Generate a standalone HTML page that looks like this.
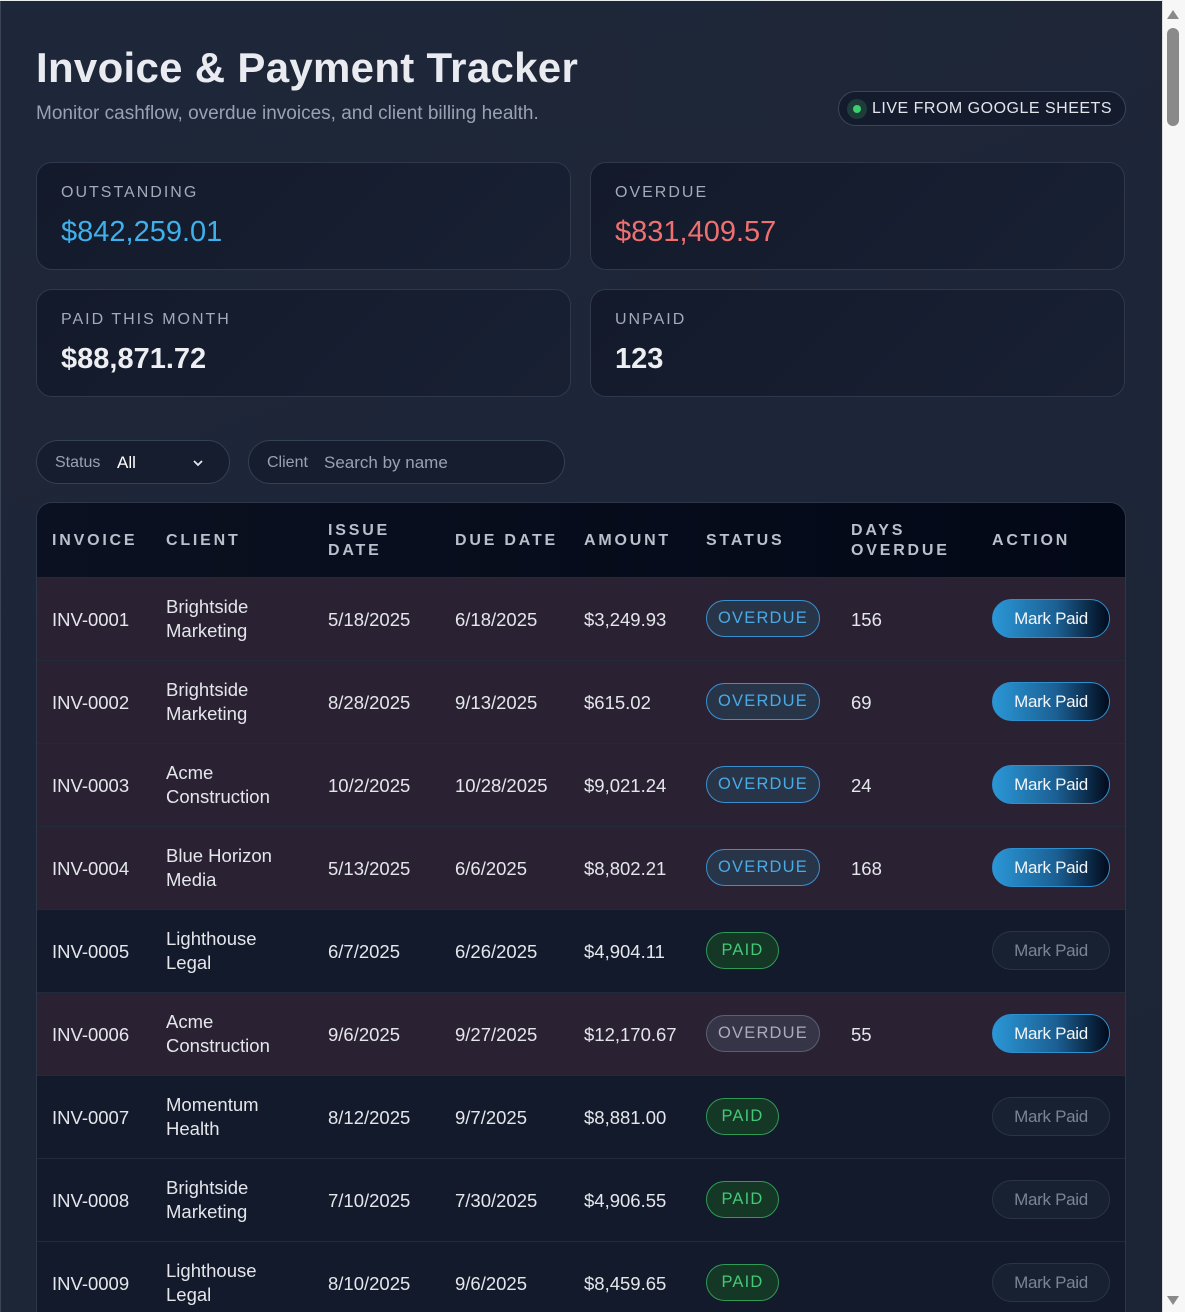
<!DOCTYPE html>
<html><head><meta charset="utf-8">
<style>
*{box-sizing:border-box;margin:0;padding:0}
html,body{width:1185px;height:1312px;overflow:hidden}
body{background:#fff;font-family:"Liberation Sans","DejaVu Sans",sans-serif;position:relative}
#page{position:absolute;left:0;top:0;width:1162px;height:1312px;background:linear-gradient(160deg,#1e2739,#1c2536);border-top:1px solid #e8eef0;overflow:hidden}
#page:before{content:"";position:absolute;left:0;top:0;width:1px;height:100%;background:#3a4558}
.sb{position:absolute;left:1162px;top:0;width:23px;height:1312px;background:#f7f7f7;border-left:1px solid #ddd}
.thumb{position:absolute;left:1167px;top:28px;width:12px;height:98px;background:#8a8a8a;border-radius:6px}
.abs{position:absolute}
h1{position:absolute;left:36px;top:43px;font-size:42px;font-weight:bold;color:#e9ebf0;letter-spacing:0.3px}
.sub{left:36px;top:102px;font-size:19px;color:#98a2b3}
.live{left:838px;top:90px;width:288px;height:35px;border:1px solid #3b4659;border-radius:18px;background:#131b2c;color:#e3e6ec;font-size:16px;letter-spacing:0.5px;line-height:33px;padding-left:33px}
.live .dot{position:absolute;left:8px;top:7px;width:20px;height:20px;border-radius:50%;background:#1e3c3a}
.live .dot:after{content:"";position:absolute;left:6px;top:6px;width:8px;height:8px;border-radius:50%;background:#3ccf6c}
.card{position:absolute;width:535px;height:108px;border:1px solid #2f394b;border-radius:16px;background:linear-gradient(135deg,#131a2b,#182033)}
.card .l{position:absolute;left:24px;top:21px;font-size:16px;letter-spacing:2px;color:#a3abb9}
.card .v{position:absolute;left:24px;top:53px;font-size:29px;font-weight:bold;color:#eceef2}
.filt{position:absolute;height:44px;top:439px;border:1px solid #344053;border-radius:22px;background:#151d2e}
.filt .k{position:absolute;top:13px;font-size:16px;color:#98a2b3}
.filt .val{position:absolute;top:12px;font-size:17px}
.tbl{position:absolute;left:36px;top:501px;width:1090px;height:830px;border:1px solid #2d374a;border-radius:16px;overflow:hidden;background:#121a2b}
.thead{position:absolute;left:0;top:0;width:100%;height:74px;background:linear-gradient(90deg,#0b1120,#030817)}
.th{position:absolute;font-size:16px;font-weight:bold;letter-spacing:2.8px;color:#b9c0cc;line-height:20px}
.row{position:absolute;left:0;width:100%;height:83px;border-top:1px solid #222b3c}
.row.od{background:#2a2233}
.row.pd{background:#121a2b}
.c{position:absolute;font-size:18.5px;color:#e4e6eb;line-height:24px}
.badge{position:absolute;left:669px;top:22px;height:37px;border-radius:19px;font-size:16.5px;letter-spacing:1.2px;line-height:35px;text-align:center}
.b-od{width:114px;border:1px solid #3b8fcf;background:#283549;color:#49aae6}
.b-gr{width:114px;border:1px solid #5b5f70;background:#363447;color:#a8acb8}
.b-pd{width:73px;border:1px solid #2f9a55;background:#143726;color:#44c877}
.btn{position:absolute;left:955px;top:21px;width:118px;height:39px;border-radius:20px;font-size:17px;line-height:37px;text-align:center;letter-spacing:-0.3px}
.btn.on{background:linear-gradient(90deg,#2a97d6,#1b5f93 55%,#020a1a);border:1px solid #2e8fd0;color:#f2f6fa}
.btn.off{background:#182131;border:1px solid #2b3446;color:#7b8494}
</style></head><body>
<div id="page">
<h1>Invoice &amp; Payment Tracker</h1>
<div class="abs sub">Monitor cashflow, overdue invoices, and client billing health.</div>
<div class="abs live"><span class="dot"></span>LIVE FROM GOOGLE SHEETS</div>

<div class="card" style="left:36px;top:161px"><div class="l">OUTSTANDING</div><div class="v" style="color:#3db1ec;font-weight:normal">$842,259.01</div></div>
<div class="card" style="left:590px;top:161px"><div class="l">OVERDUE</div><div class="v" style="color:#f07070;font-weight:normal">$831,409.57</div></div>
<div class="card" style="left:36px;top:288px"><div class="l">PAID THIS MONTH</div><div class="v">$88,871.72</div></div>
<div class="card" style="left:590px;top:288px"><div class="l">UNPAID</div><div class="v">123</div></div>

<div class="filt" style="left:36px;width:194px"><span class="k" style="left:18px">Status</span><span class="val" style="left:80px;color:#fff">All</span>
<svg class="abs" style="left:154px;top:15px" width="14" height="14" viewBox="0 0 14 14"><path d="M3 5l4 4 4-4" fill="none" stroke="#e6e8ee" stroke-width="1.8"/></svg></div>
<div class="filt" style="left:248px;width:317px"><span class="k" style="left:18px">Client</span><span class="val" style="left:75px;color:#98a2b3">Search by name</span></div>

<div class="tbl">
<div class="thead">
<div class="th" style="left:15px;top:28px">INVOICE</div>
<div class="th" style="left:129px;top:28px">CLIENT</div>
<div class="th" style="left:291px;top:18px">ISSUE<br>DATE</div>
<div class="th" style="left:418px;top:28px">DUE DATE</div>
<div class="th" style="left:547px;top:28px">AMOUNT</div>
<div class="th" style="left:669px;top:28px">STATUS</div>
<div class="th" style="left:814px;top:18px">DAYS<br>OVERDUE</div>
<div class="th" style="left:955px;top:28px">ACTION</div>
</div>

<div class="row od" style="top:74px"><div class="c" style="left:15px;top:30px">INV-0001</div><div class="c" style="left:129px;top:17px">Brightside<br>Marketing</div><div class="c" style="left:291px;top:30px">5/18/2025</div><div class="c" style="left:418px;top:30px">6/18/2025</div><div class="c" style="left:547px;top:30px">$3,249.93</div><div class="badge b-od">OVERDUE</div><div class="c" style="left:814px;top:30px">156</div><div class="btn on">Mark Paid</div></div>
<div class="row od" style="top:157px"><div class="c" style="left:15px;top:30px">INV-0002</div><div class="c" style="left:129px;top:17px">Brightside<br>Marketing</div><div class="c" style="left:291px;top:30px">8/28/2025</div><div class="c" style="left:418px;top:30px">9/13/2025</div><div class="c" style="left:547px;top:30px">$615.02</div><div class="badge b-od">OVERDUE</div><div class="c" style="left:814px;top:30px">69</div><div class="btn on">Mark Paid</div></div>
<div class="row od" style="top:240px"><div class="c" style="left:15px;top:30px">INV-0003</div><div class="c" style="left:129px;top:17px">Acme<br>Construction</div><div class="c" style="left:291px;top:30px">10/2/2025</div><div class="c" style="left:418px;top:30px">10/28/2025</div><div class="c" style="left:547px;top:30px">$9,021.24</div><div class="badge b-od">OVERDUE</div><div class="c" style="left:814px;top:30px">24</div><div class="btn on">Mark Paid</div></div>
<div class="row od" style="top:323px"><div class="c" style="left:15px;top:30px">INV-0004</div><div class="c" style="left:129px;top:17px">Blue Horizon<br>Media</div><div class="c" style="left:291px;top:30px">5/13/2025</div><div class="c" style="left:418px;top:30px">6/6/2025</div><div class="c" style="left:547px;top:30px">$8,802.21</div><div class="badge b-od">OVERDUE</div><div class="c" style="left:814px;top:30px">168</div><div class="btn on">Mark Paid</div></div>
<div class="row pd" style="top:406px"><div class="c" style="left:15px;top:30px">INV-0005</div><div class="c" style="left:129px;top:17px">Lighthouse<br>Legal</div><div class="c" style="left:291px;top:30px">6/7/2025</div><div class="c" style="left:418px;top:30px">6/26/2025</div><div class="c" style="left:547px;top:30px">$4,904.11</div><div class="badge b-pd">PAID</div><div class="btn off">Mark Paid</div></div>
<div class="row od" style="top:489px"><div class="c" style="left:15px;top:30px">INV-0006</div><div class="c" style="left:129px;top:17px">Acme<br>Construction</div><div class="c" style="left:291px;top:30px">9/6/2025</div><div class="c" style="left:418px;top:30px">9/27/2025</div><div class="c" style="left:547px;top:30px">$12,170.67</div><div class="badge b-gr">OVERDUE</div><div class="c" style="left:814px;top:30px">55</div><div class="btn on">Mark Paid</div></div>
<div class="row pd" style="top:572px"><div class="c" style="left:15px;top:30px">INV-0007</div><div class="c" style="left:129px;top:17px">Momentum<br>Health</div><div class="c" style="left:291px;top:30px">8/12/2025</div><div class="c" style="left:418px;top:30px">9/7/2025</div><div class="c" style="left:547px;top:30px">$8,881.00</div><div class="badge b-pd">PAID</div><div class="btn off">Mark Paid</div></div>
<div class="row pd" style="top:655px"><div class="c" style="left:15px;top:30px">INV-0008</div><div class="c" style="left:129px;top:17px">Brightside<br>Marketing</div><div class="c" style="left:291px;top:30px">7/10/2025</div><div class="c" style="left:418px;top:30px">7/30/2025</div><div class="c" style="left:547px;top:30px">$4,906.55</div><div class="badge b-pd">PAID</div><div class="btn off">Mark Paid</div></div>
<div class="row pd" style="top:738px"><div class="c" style="left:15px;top:30px">INV-0009</div><div class="c" style="left:129px;top:17px">Lighthouse<br>Legal</div><div class="c" style="left:291px;top:30px">8/10/2025</div><div class="c" style="left:418px;top:30px">9/6/2025</div><div class="c" style="left:547px;top:30px">$8,459.65</div><div class="badge b-pd">PAID</div><div class="btn off">Mark Paid</div></div>
</div>
</div>
<div class="sb"></div>
<div class="thumb"></div>
<svg class="abs" style="left:1166px;top:8px" width="14" height="12"><path d="M7 2L13 11H1Z" fill="#8a8a8a"/></svg>
<svg class="abs" style="left:1166px;top:1295px" width="14" height="12"><path d="M1 1H13L7 10Z" fill="#8a8a8a"/></svg>
</body></html>
